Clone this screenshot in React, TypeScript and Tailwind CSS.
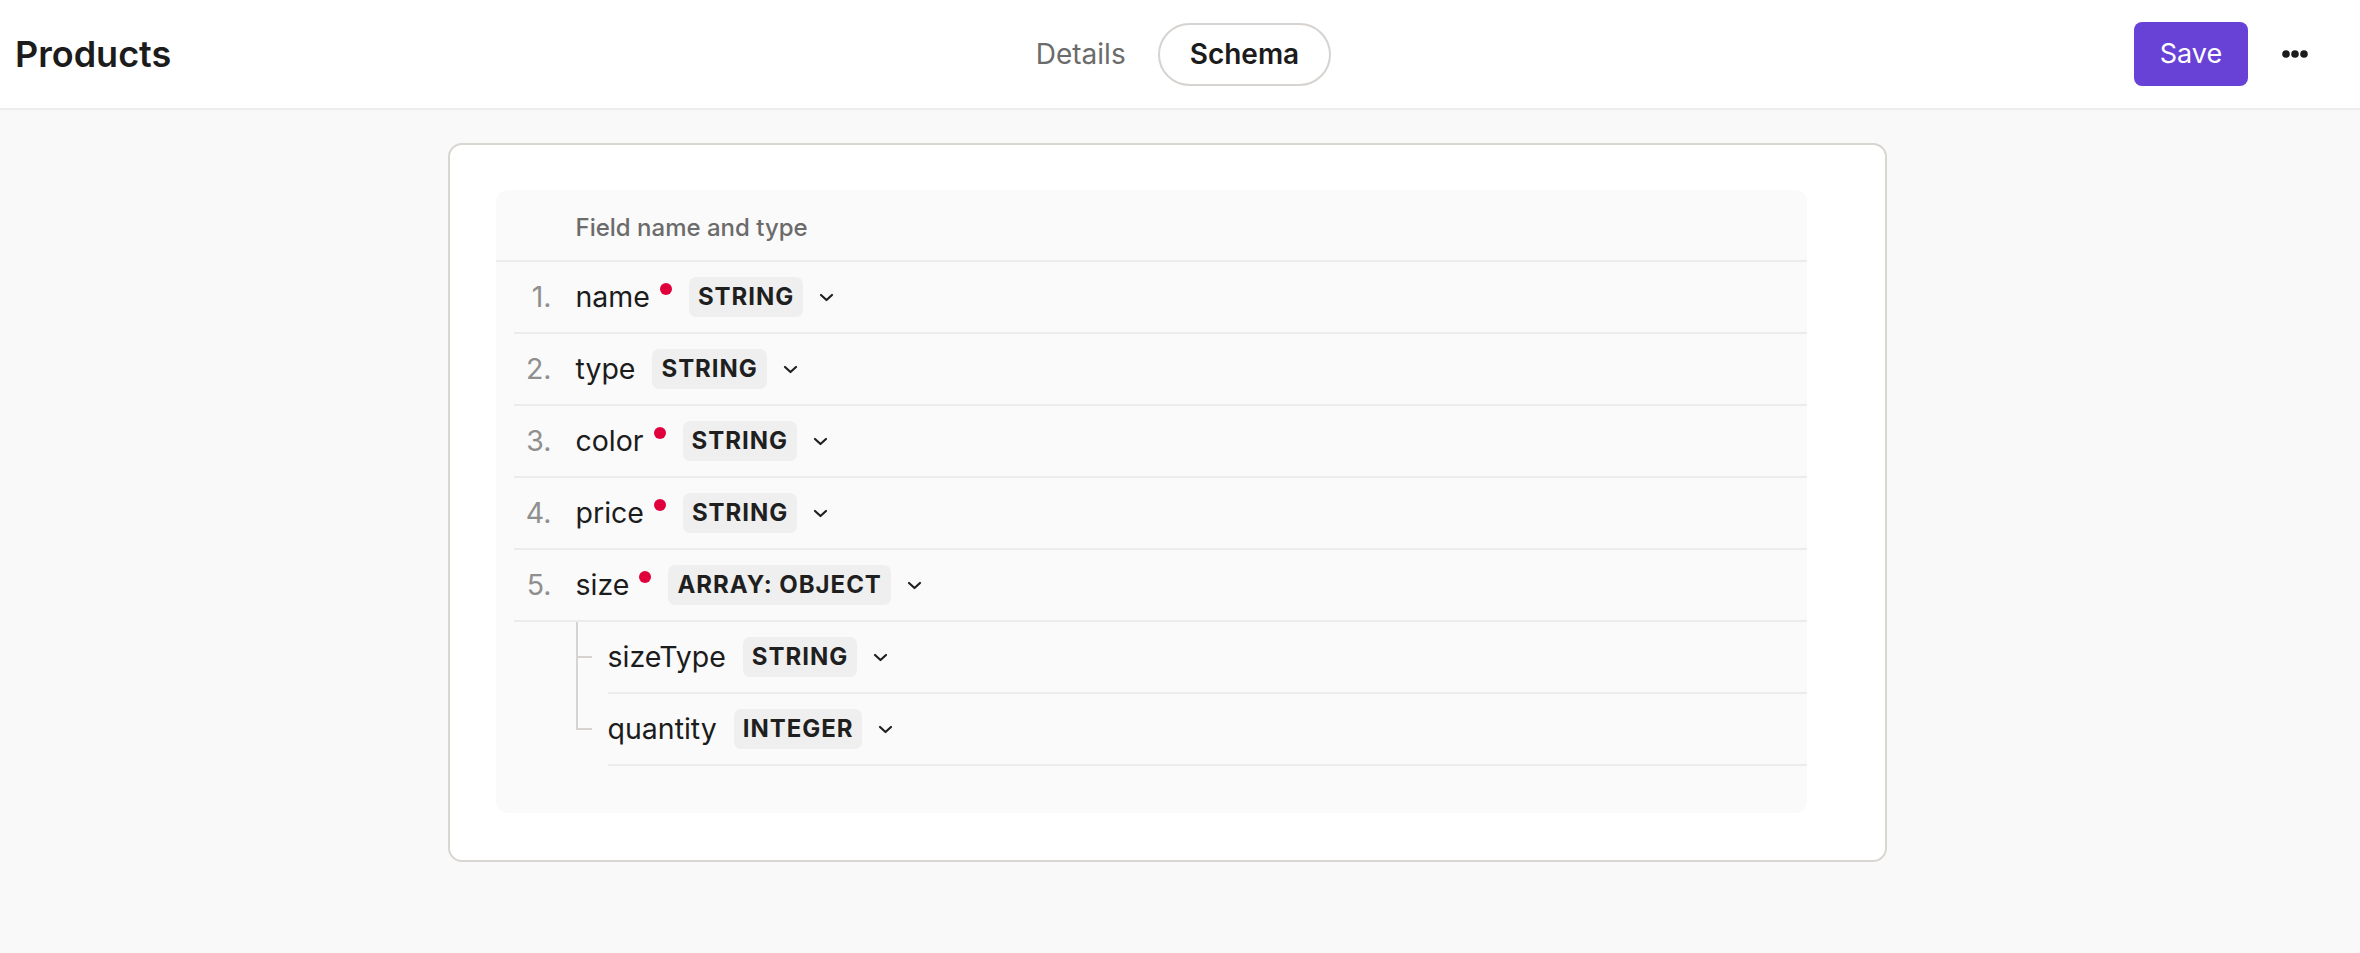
type Field = { name: string; type: string; required?: boolean; children?: Field[] };

const fields: Field[] = [
  { name: 'name', type: 'STRING', required: true },
  { name: 'type', type: 'STRING' },
  { name: 'color', type: 'STRING', required: true },
  { name: 'price', type: 'STRING', required: true },
  {
    name: 'size',
    type: 'ARRAY: OBJECT',
    required: true,
    children: [
      { name: 'sizeType', type: 'STRING' },
      { name: 'quantity', type: 'INTEGER' },
    ],
  },
];

const Chevron = () => (
  <svg width="15" height="9" viewBox="0 0 15 9" fill="none" stroke="#1f1f1f" strokeWidth="2.2" strokeLinecap="round" strokeLinejoin="round">
    <polyline points="2 2 7.5 7 13 2" />
  </svg>
);

const Dots = () => (
  <svg width="26" height="8" viewBox="0 0 26 8" fill="#1c1c1c">
    <circle cx="4" cy="4" r="3.8" />
    <circle cx="13" cy="4" r="3.8" />
    <circle cx="22" cy="4" r="3.8" />
  </svg>
);

function FieldLabel({ field }: { field: Field }) {
  return (
    <div className="flex items-center">
      <span className="flex items-start text-[28.5px] text-[#1c1c1c]">
        {field.name}
        {field.required && <span className="ml-[10px] mt-[7px] w-[12px] h-[12px] rounded-full bg-[#e0003c]" />}
      </span>
      <span className="ml-[17px] h-[40px] px-[9px] flex items-center rounded-[7px] bg-[#efefef] text-[24px] font-bold tracking-[0.04em] text-[#1f1f1f]">
        {field.type}
      </span>
      <span className="ml-[16px] flex items-center">
        <Chevron />
      </span>
    </div>
  );
}

export default function App() {
  return (
    <div className="min-h-[953px] bg-[#f9f9f9] font-['Inter',sans-serif]">
      {/* Header */}
      <header className="h-[110px] bg-white border-b-2 border-[#ededed] grid grid-cols-[1fr_auto_1fr] items-center pl-[15px] pr-[40px]">
        <h1 className="text-[36px] font-semibold text-[#1c1c1c]">Products</h1>
        <nav className="flex items-center">
          <button className="h-[63px] px-[32px] text-[28px] text-[#6b6b6b]">Details</button>
          <button className="h-[63px] px-[30px] rounded-full border-2 border-[#d6d3d0] text-[28px] font-semibold text-[#1c1c1c]">
            Schema
          </button>
        </nav>
        <div className="flex items-center justify-end gap-[22px]">
          <button className="h-[64px] w-[114px] rounded-[8px] bg-[#6842d6] text-white text-[27px]">Save</button>
          <button className="w-[50px] h-[50px] flex items-center justify-center">
            <Dots />
          </button>
        </div>
      </header>

      {/* Body */}
      <div className="pl-[14px] pr-[40px] pt-[33px]">
        <div className="mx-auto w-[1439px] bg-white border-2 border-[#d9d6d2] rounded-[14px] pl-[46px] pr-[78px] pt-[45px] pb-[47px]">
          <div className="rounded-[12px] bg-[#fafafa] pb-[47px]">
            <div className="h-[72px] border-b-2 border-[#ececec] flex items-center pl-[80px] pt-[6px] text-[24px] font-medium text-[#6b6b6b]">
              Field name and type
            </div>
            {fields.map((f, i) => (
              <div key={f.name}>
                <div className="ml-[18px] h-[72px] border-b-2 border-[#ececec] flex items-center gap-[24px]">
                  <span className="w-[38px] text-right text-[28.5px] text-[#8f8f8f]">{i + 1}.</span>
                  <FieldLabel field={f} />
                </div>
                {f.children && (
                  <div className="ml-[80px]">
                    {f.children.map((c, j) => {
                      const last = j === f.children!.length - 1;
                      return (
                        <div key={c.name} className="flex h-[72px]">
                          <div className="w-[32px] flex flex-col">
                            <div className="h-[36px] w-[16px] border-l-2 border-b-2 border-[#d6d3d0]" />
                            {!last && <div className="flex-1 border-l-2 border-[#d6d3d0]" />}
                          </div>
                          <div className="flex-1 border-b-2 border-[#ececec] flex items-center">
                            <FieldLabel field={c} />
                          </div>
                        </div>
                      );
                    })}
                  </div>
                )}
              </div>
            ))}
          </div>
        </div>
      </div>
    </div>
  );
}
